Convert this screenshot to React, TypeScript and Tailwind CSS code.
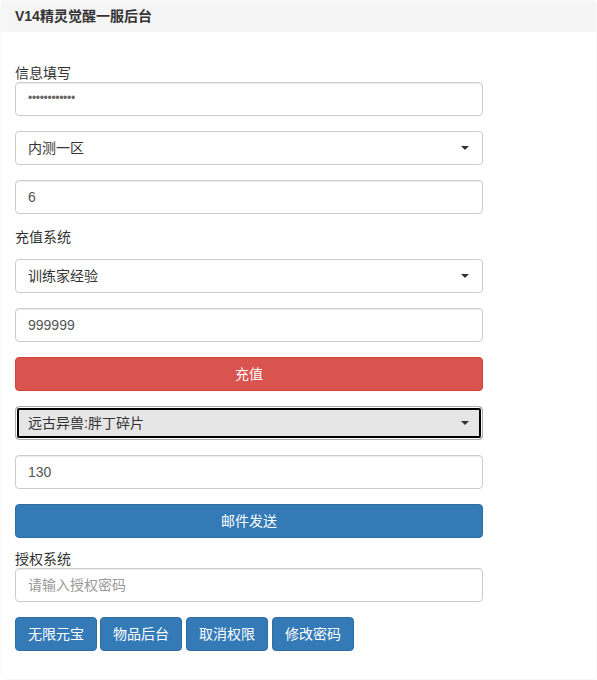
const cjk = "font-['Liberation_Sans','Noto_Sans_CJK_SC',sans-serif]";

function Field({ children, placeholder }: { children?: React.ReactNode; placeholder?: boolean }) {
  return (
    <div
      className={`flex items-center h-[34px] w-[468px] px-3 border border-[#ccc] rounded bg-white text-sm shadow-[inset_0_1px_1px_rgba(0,0,0,0.075)] ${
        placeholder ? "text-[#999]" : "text-[#555]"
      }`}
    >
      {children}
    </div>
  );
}

function Select({ value, focused }: { value: string; focused?: boolean }) {
  return (
    <div
      className={`flex items-center justify-between h-[34px] w-[468px] pl-3 pr-[13px] rounded text-sm text-[#333] border ${
        focused
          ? "bg-[#e6e6e6] border-[#adadad] shadow-[inset_0_0_0_1px_#fff,inset_0_0_0_3px_#000]"
          : "bg-white border-[#ccc]"
      }`}
    >
      <span>{value}</span>
      <span className="w-0 h-0 border-x-[4px] border-x-transparent border-t-[4px] border-t-[#333]" />
    </div>
  );
}

function Label({ children, className = "" }: { children: React.ReactNode; className?: string }) {
  return <div className={`h-[18px] leading-[18px] text-sm text-[#333] ${className}`}>{children}</div>;
}

export default function App() {
  const actions = ["无限元宝", "物品后台", "取消权限", "修改密码"];

  return (
    <div className={`w-[597px] h-[680px] bg-white ${cjk}`}>
      <div className="h-[680px] rounded border border-[#f8f8f8] overflow-hidden">
        {/* Heading */}
        <div className="h-[31px] flex items-center px-[14px] bg-[#f5f5f5] text-[#333] text-[14px] font-bold">
          V14精灵觉醒一服后台
        </div>

        {/* Body */}
        <div className="pt-[32px] px-[14px] flex flex-col">
          <Label>信息填写</Label>
          <Field>
            <span className="font-['Liberation_Sans',sans-serif] text-[12px] tracking-[-0.3px] text-[#666]">••••••••••••</span>
          </Field>
          <div className="mt-[15px]">
            <Select value="内测一区" />
          </div>
          <div className="mt-[15px]">
            <Field>6</Field>
          </div>

          <Label className="mt-[14px]">充值系统</Label>
          <div className="mt-[13px]">
            <Select value="训练家经验" />
          </div>
          <div className="mt-[15px]">
            <Field>999999</Field>
          </div>
          <button className="mt-[15px] h-[34px] w-[468px] rounded border border-[#d43f3a] bg-[#d9534f] text-white text-sm">
            充值
          </button>
          <div className="mt-[15px]">
            <Select value="远古异兽:胖丁碎片" focused />
          </div>
          <div className="mt-[15px]">
            <Field>130</Field>
          </div>
          <button className="mt-[15px] h-[34px] w-[468px] rounded border border-[#2e6da4] bg-[#337ab7] text-white text-sm">
            邮件发送
          </button>

          <Label className="mt-[12px]">授权系统</Label>
          <Field placeholder>请输入授权密码</Field>

          <div className="mt-[15px] flex gap-1">
            {actions.map((a, i) => (
              <button
                key={a}
                className={`h-[34px] w-[82px] rounded border border-[#2e6da4] bg-[#337ab7] text-white text-sm ${
                  i === 1 ? "-ml-px" : ""
                }`}
              >
                {a}
              </button>
            ))}
          </div>
        </div>
      </div>
    </div>
  );
}
